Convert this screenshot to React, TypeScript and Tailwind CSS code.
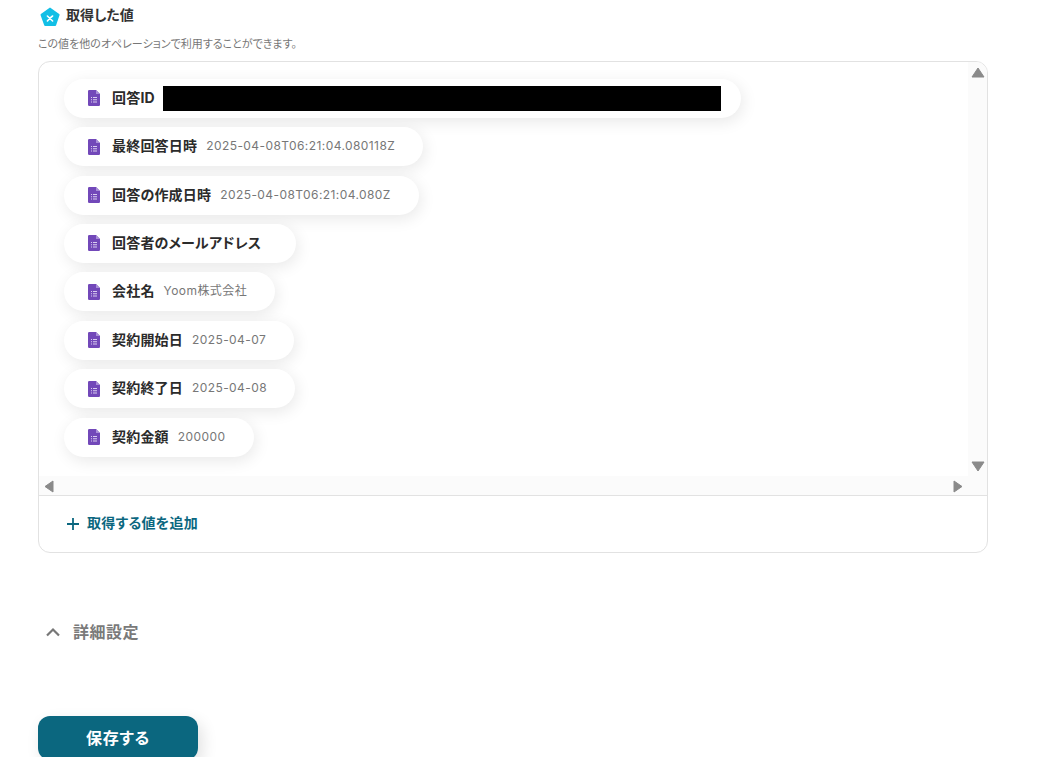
const font = { fontFamily: 'Inter, "Noto Sans CJK JP", "Noto Sans", sans-serif' };

function FormIcon() {
  return (
    <svg width="12" height="16" viewBox="0 0 12 16" className="shrink-0">
      <path d="M1.2 0H8l4 4v10.8a1.2 1.2 0 0 1-1.2 1.2H1.2A1.2 1.2 0 0 1 0 14.8V1.2A1.2 1.2 0 0 1 1.2 0z" fill="#7248b9" />
      <path d="M8 0l4 4H8z" fill="#a98fd8" />
      <path d="M3 7h1v1H3zM5 7h4v1H5zM3 9.2h1v1H3zM5 9.2h4v1H5zM3 11.4h1v1H3zM5 11.4h4v1H5z" fill="#d9cdf0" />
    </svg>
  );
}

function Chip({ label, value, redacted }: { label: string; value?: string; redacted?: boolean }) {
  return (
    <div className="mb-[9.43px] flex h-[39px] w-fit items-center rounded-full bg-white pl-6 pr-7 shadow-[2px_4px_16px_rgba(0,0,0,0.09)]">
      <FormIcon />
      <span className="ml-[12px] pb-[1px] text-[14px] font-bold leading-none tracking-[0.2px] text-[#2b2b2b]">{label}</span>
      {value && <span className="ml-[9px] pb-[1px] text-[12px] leading-none tracking-[0.42px] text-[#777]">{value}</span>}
      {!value && !redacted && <span className="ml-[7px]" />}
      {redacted && <span className="ml-[8px] mr-[-8px] h-[25px] w-[558px] bg-black" />}
    </div>
  );
}

export default function App() {
  const rows = [
    { label: "最終回答日時", value: "2025-04-08T06:21:04.080118Z" },
    { label: "回答の作成日時", value: "2025-04-08T06:21:04.080Z" },
    { label: "回答者のメールアドレス" },
    { label: "会社名", value: "Yoom株式会社" },
    { label: "契約開始日", value: "2025-04-07" },
    { label: "契約終了日", value: "2025-04-08" },
    { label: "契約金額", value: "200000" },
  ];
  return (
    <div style={font} className='h-[757px] w-[1038px] overflow-hidden bg-white pl-[38px] [font-feature-settings:"palt"]'>
      <div className="flex h-[31px] items-center pl-[2px]">
        <svg width="20" height="20" viewBox="0 0 20 20" className="mt-[2px]">
          <path d="M10 .5l9.2 6.6a1 1 0 0 1 .3 1.1l-3.4 10a1 1 0 0 1-1 .7H5.2a1 1 0 0 1-1-.7L.6 8.2a1 1 0 0 1 .3-1.1z" fill="#12bfe6" />
          <path d="M7.4 9l5.2 5M12.6 9c-1.8 1.2-3.6 3-5.2 5" fill="none" stroke="#fff" strokeWidth="1.6" strokeLinecap="round" />
        </svg>
        <span className="ml-[6px] pb-[2px] text-[14px] font-bold text-[#333]">取得した値</span>
      </div>
      <p className="mt-[1px] h-[29px] pt-[1px] text-[11px] leading-[23px] text-[#777]">この値を他のオペレーションで利用することができます。</p>
      <div className="h-[492px] w-[950px] overflow-hidden rounded-xl border border-[#e2e2e2]">
        <div className="flex h-[434px] border-b border-[#e2e2e2]">
          <div className="flex min-w-0 flex-1 flex-col">
            <div className="h-[414px] pl-[25px] pt-[16.7px]">
              <Chip label="回答ID" redacted />
              {rows.map((r) => (
                <Chip key={r.label} label={r.label} value={r.value} />
              ))}
            </div>
            <div className="flex h-[19px] items-center justify-between bg-[#fbfbfb] pl-[5px] pr-[5px] pt-[2px]">
              <svg width="10" height="13" viewBox="0 0 10 13"><path d="M9 1v11L1 6.5z" fill="#8a8a8a" stroke="#8a8a8a" strokeLinejoin="round" /></svg>
              <svg width="10" height="13" viewBox="0 0 10 13"><path d="M1 1v11l8-5.5z" fill="#8a8a8a" stroke="#8a8a8a" strokeLinejoin="round" /></svg>
            </div>
          </div>
          <div className="flex w-[19px] flex-col items-center justify-between bg-[#fbfbfb] pb-[23px] pt-[5px]">
            <svg width="14" height="11" viewBox="0 0 14 11"><path d="M7 1l6 9H1z" fill="#8a8a8a" stroke="#8a8a8a" strokeLinejoin="round" /></svg>
            <svg width="14" height="11" viewBox="0 0 14 11"><path d="M1 1h12l-6 9z" fill="#8a8a8a" stroke="#8a8a8a" strokeLinejoin="round" /></svg>
          </div>
        </div>
        <div className="flex h-[56px] items-center pl-[27px]">
          <svg width="14" height="14" viewBox="0 0 14 14"><path d="M7 1v12M1 7h12" stroke="#0b677f" strokeWidth="1.8" /></svg>
          <span className="ml-[7px] pb-[3px] text-[14px] font-bold tracking-[0.25px] text-[#0b677f]">取得する値を追加</span>
        </div>
      </div>
      <div className="mt-[66px] flex h-[26px] items-center pl-[7px]">
        <svg width="16" height="10" viewBox="0 0 16 10"><path d="M2 8.5l6-6 6 6" fill="none" stroke="#777" strokeWidth="2.2" /></svg>
        <span className="ml-[12px] text-[16px] font-bold tracking-[0.5px] text-[#7a7a7a]">詳細設定</span>
      </div>
      <button className="mt-[71px] h-[44px] w-[160px] rounded-xl bg-[#0b677f] text-[16px] font-bold tracking-[0.7px] text-white shadow-[4px_6px_16px_rgba(0,0,0,0.12)]">保存する</button>
    </div>
  );
}
